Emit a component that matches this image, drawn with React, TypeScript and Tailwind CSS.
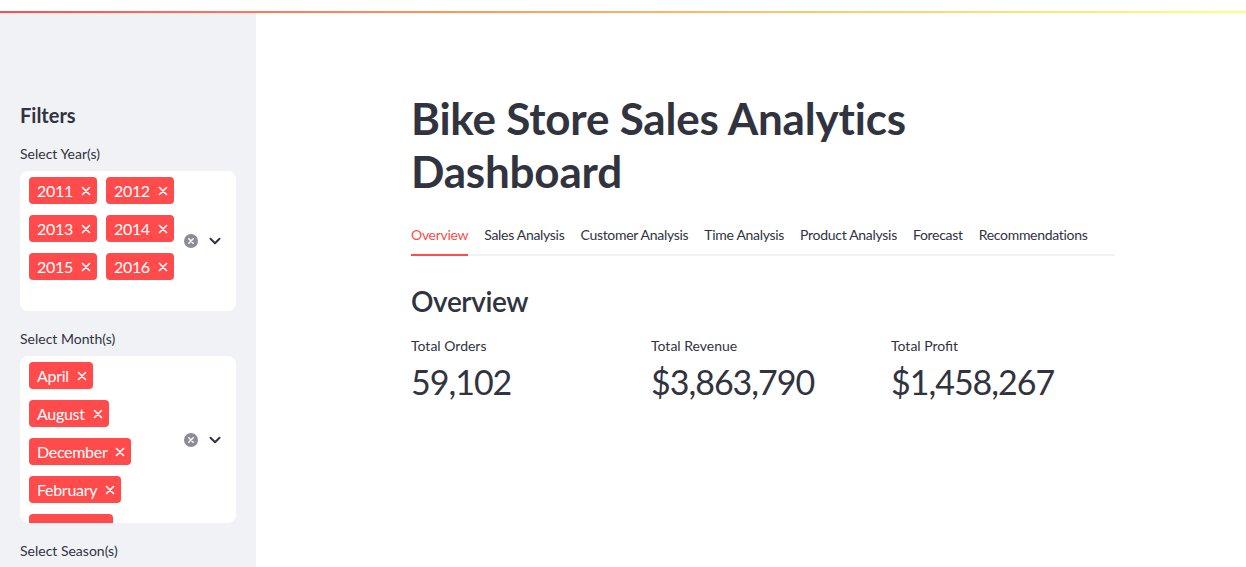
import React from 'react';

const years = [
  ['2011', '2012'],
  ['2013', '2014'],
  ['2015', '2016'],
];

const months = [['April'], ['August'], ['December'], ['February'], ['January']];

const tabs = ['Overview', 'Sales Analysis', 'Customer Analysis', 'Time Analysis', 'Product Analysis', 'Forecast', 'Recommendations'];

const metrics = [
  { label: 'Total Orders', value: '59,102' },
  { label: 'Total Revenue', value: '$3,863,790' },
  { label: 'Total Profit', value: '$1,458,267' },
];

function Tag({ text }: { text: string }) {
  return (
    <span className="flex h-[27px] shrink-0 items-center gap-2 rounded-[4px] bg-[#ff4b4b] pl-2 pr-[6px] text-[16px] leading-none tracking-[-0.3px] text-white">
      {text}
      <svg width="10" height="10" viewBox="0 0 10 10" fill="none" stroke="white" strokeWidth="1.6" strokeLinecap="round">
        <path d="M1.5 1.5 8.5 8.5M8.5 1.5 1.5 8.5" />
      </svg>
    </span>
  );
}

function Controls() {
  return (
    <div className="flex items-center gap-[11px] pr-[15px]">
      <svg width="14" height="14" viewBox="0 0 14 14">
        <circle cx="7" cy="7" r="7" fill="#8a8c97" />
        <path d="M4.8 4.8 9.2 9.2M9.2 4.8 4.8 9.2" stroke="white" strokeWidth="1.5" strokeLinecap="round" />
      </svg>
      <svg width="12" height="8" viewBox="0 0 12 8" fill="none" stroke="#31333f" strokeWidth="2" strokeLinecap="round" strokeLinejoin="round">
        <path d="M1.5 1.8 6 6.2 10.5 1.8" />
      </svg>
    </div>
  );
}

function MultiSelect({ rows, height }: { rows: string[][]; height: string }) {
  return (
    <div className={`flex ${height} overflow-hidden rounded-lg bg-white`}>
      <div className="flex flex-1 flex-col gap-[11px] pl-[9px] pt-[6px]">
        {rows.map((row, i) => (
          <div key={i} className="flex gap-[9px]">
            {row.map((t) => (
              <Tag key={t} text={t} />
            ))}
          </div>
        ))}
      </div>
      <div className="flex items-center">
        <Controls />
      </div>
    </div>
  );
}

export default function App() {
  return (
    <div className="min-h-screen bg-white font-['Lato',sans-serif] text-[#31333f]">
      <div className="h-[11px]" />
      <div className="h-[2px] bg-gradient-to-r from-[#ff4b4b] to-[#ffff80]" />
      <div className="flex h-[554px] overflow-hidden">
        {/* Sidebar */}
        <aside className="w-[256px] shrink-0 bg-[#f0f2f6] px-5 pt-[90px]">
          <h2 className="text-[20px] font-bold leading-[24px]">Filters</h2>
          <p className="mt-[17px] text-[14px] leading-[20px]">Select Year(s)</p>
          <div className="mt-[7px]">
            <MultiSelect rows={years} height="h-[140px]" />
          </div>
          <p className="mt-[18px] text-[14px] leading-[20px]">Select Month(s)</p>
          <div className="mt-[7px]">
            <MultiSelect rows={months} height="h-[167px]" />
          </div>
          <p className="mt-[18px] text-[14px] leading-[20px]">Select Season(s)</p>
        </aside>

        {/* Main */}
        <main className="flex-1 pl-[155px] pt-[79px]">
          <div className="w-[704px]">
            <h1 className="text-[44px] font-bold leading-[53px] tracking-[-0.2px]">
              Bike Store Sales Analytics
              <br />
              Dashboard
            </h1>

            <div className="mt-[16px] flex h-[42px] gap-4 border-b-2 border-[#f0f2f6]">
              {tabs.map((t, i) => (
                <div
                  key={t}
                  className={`-mb-[2px] flex items-center border-b-2 text-[14px] tracking-[-0.3px] ${
                    i === 0 ? 'border-[#ff4b4b] text-[#ff4b4b]' : 'border-transparent'
                  }`}
                >
                  {t}
                </div>
              ))}
            </div>

            <h3 className="mt-[27px] text-[28px] font-semibold leading-[36px] tracking-[-0.4px]">Overview</h3>

            <div className="mt-[17px] flex">
              {metrics.map((m) => (
                <div key={m.label} className="w-[240px] shrink-0">
                  <p className="text-[14px] leading-[20px]">{m.label}</p>
                  <p className="mt-1 text-[34px] leading-[44px] tracking-[-1px]">{m.value}</p>
                </div>
              ))}
            </div>
          </div>
        </main>
      </div>
    </div>
  );
}
